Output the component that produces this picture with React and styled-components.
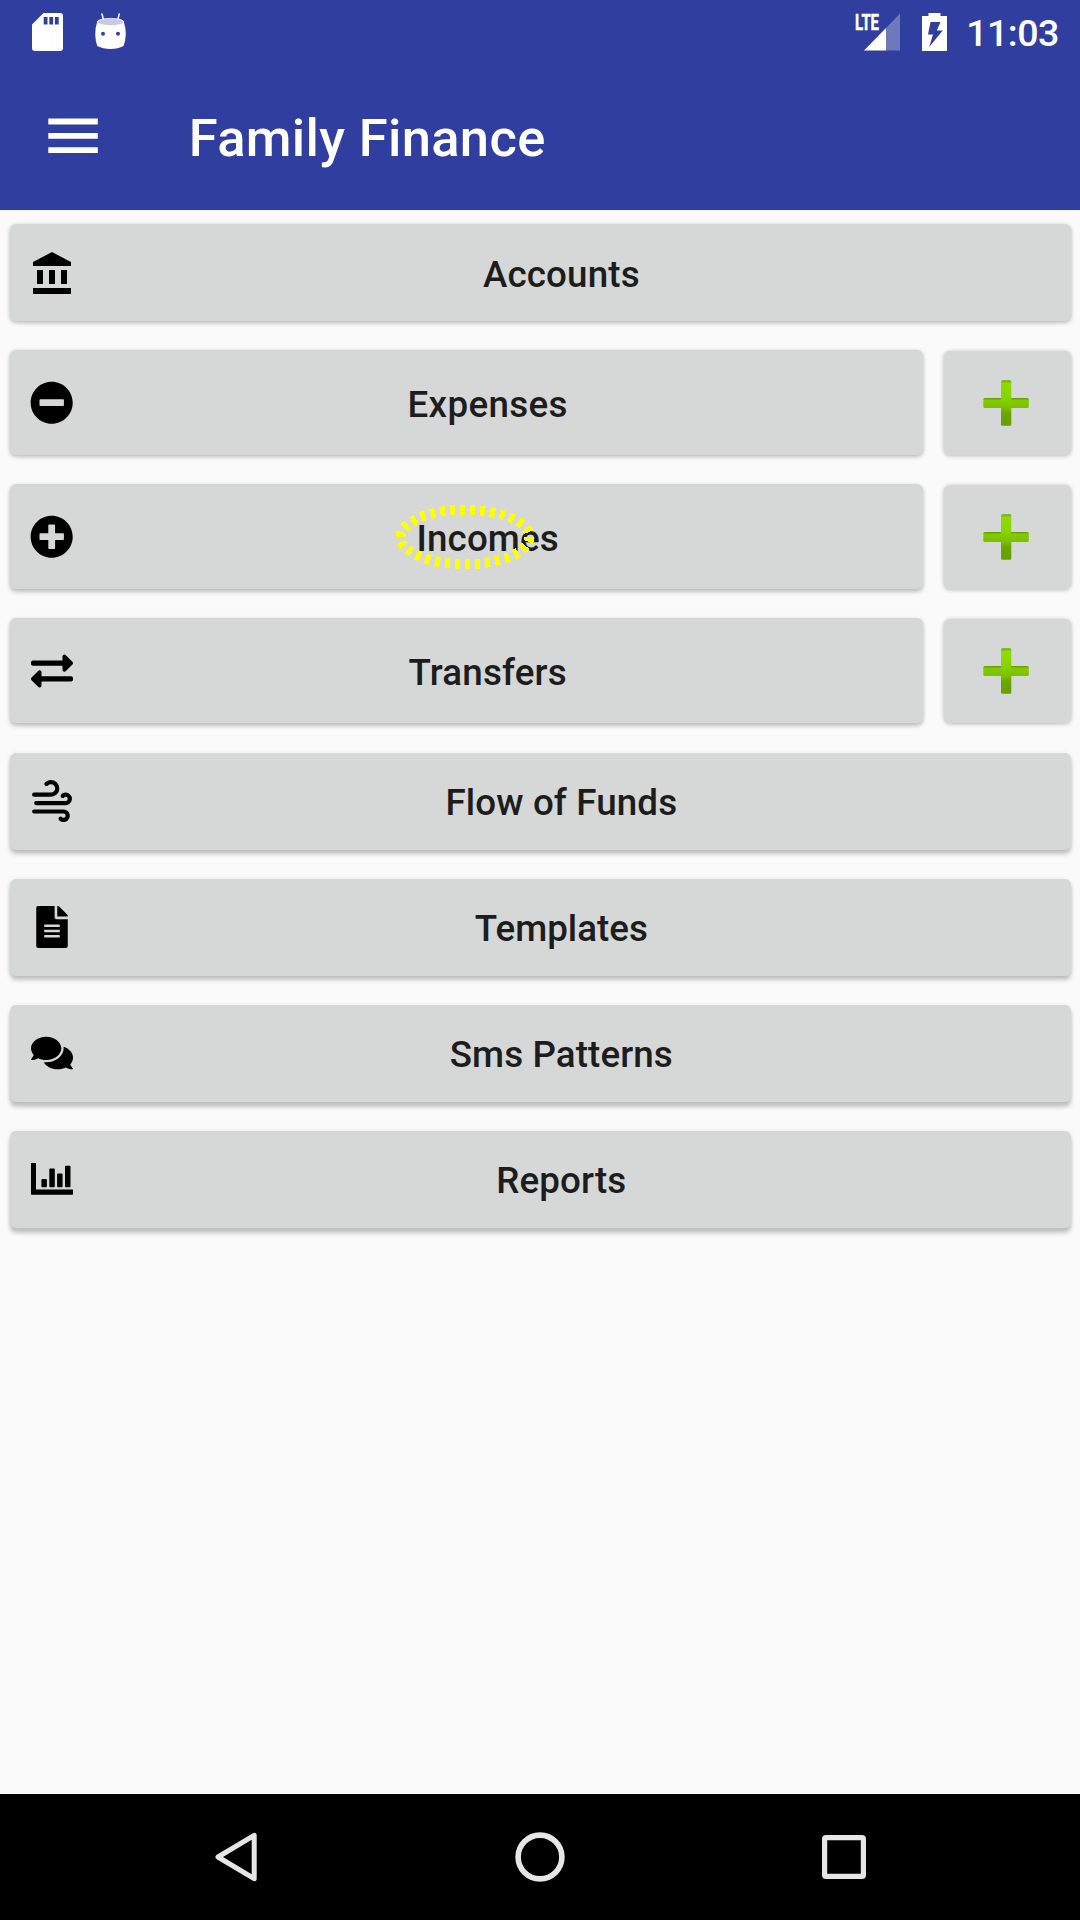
import React from "react";
import styled, { createGlobalStyle } from "styled-components";
import {
  FaMinusCircle,
  FaPlusCircle,
  FaExchangeAlt,
  FaFileAlt,
  FaComments,
} from "react-icons/fa";

const GlobalStyle = createGlobalStyle`
  * { box-sizing: border-box; }
  body { margin: 0; background: #fafafa; }
`;

const Screen = styled.div`
  width: 1080px;
  height: 1920px;
  display: flex;
  flex-direction: column;
  background: #fafafa;
  font-family: Roboto, "Liberation Sans", sans-serif;
  font-weight: 500;
  overflow: hidden;
`;

const Header = styled.header`
  height: 210px;
  background: #303f9f;
  color: #fff;
`;

const StatusBar = styled.div`
  height: 63px;
  display: flex;
  justify-content: space-between;
  padding-left: 32px;
  padding-right: 21.2px;
`;

const StatusGroup = styled.div`
  display: flex;
  align-items: center;
  gap: ${(p) => p.$gap}px;
`;

const Glyph = styled.svg`
  display: block;
  flex: none;
  overflow: visible;
`;

const Clock = styled.time`
  font-size: 37.5px;
  line-height: 44px;
  padding-top: 2px;
  letter-spacing: -0.5px;
  margin-left: -2px;
`;

const Toolbar = styled.div`
  height: 147px;
  display: flex;
  align-items: center;
  padding: 0 42px 1px 48px;
  gap: 90.8px;
`;

const MenuButton = styled.button`
  border: 0;
  padding: 0;
  background: none;
  display: flex;
`;

const Title = styled.h1`
  margin: 0;
  padding-top: 4px;
  font-size: 52.5px;
  line-height: 62px;
  font-weight: 500;
  letter-spacing: 0.33px;
`;

const Menu = styled.main`
  flex: 1;
  display: flex;
  flex-direction: column;
  gap: 29px;
  padding: 14px 9.4px 0 10.4px;
`;

const MenuRow = styled.div`
  display: flex;
  align-items: flex-end;
  gap: 20.2px;
  height: ${(p) => (p.$tall ? 105 : 97)}px;

  &:nth-child(4) {
    margin-bottom: 0.8px;
  }
`;

const Surface = styled.button`
  border: 0;
  border-radius: 6px;
  background: #d6d7d7;
  color: #1d1d1d;
  font: inherit;
  display: flex;
  align-items: center;
  box-shadow: 0 ${(p) => p.$depth}px 4px rgba(0, 0, 0, 0.22),
    0 0 4px rgba(0, 0, 0, 0.08);
`;

const ItemButton = styled(Surface)`
  flex: 1;
  height: 100%;
  padding: 0 21px 0 20.6px;
`;

const AddButton = styled(Surface)`
  width: 127.1px;
  height: 104.5px;
  justify-content: center;
  padding: 0 1.5px 0 0;
`;

const IconSlot = styled.span`
  width: 42px;
  height: 42px;
  display: flex;
  align-items: center;
  justify-content: center;
  color: #000;

  svg {
    flex: none;
  }
`;

const Label = styled.span`
  flex: 1;
  text-align: center;
  font-size: 36.75px;
  line-height: 44px;
  padding-top: ${(p) => p.$drop}px;
  letter-spacing: ${(p) => p.$tracking}px;
`;

const Marked = styled.span`
  position: relative;
`;

const Highlight = styled.svg`
  position: absolute;
  left: -22px;
  top: -14.5px;
`;

const NavBar = styled.nav`
  height: 126px;
  background: #000;
  display: flex;
  align-items: center;
  justify-content: center;
  gap: 256.7px;
`;

const NavKey = styled.button`
  border: 0;
  padding: 0;
  background: none;
  display: flex;
`;

const SdCardIcon = () => (
  <Glyph width="31" height="38" viewBox="0 0 31 38">
    <path
      fill="#fff"
      fillRule="evenodd"
      d="M11.500 0H28a3 3 0 0 1 3 3v32a3 3 0 0 1-3 3H3a3 3 0 0 1-3-3V11.500zM11.700 4v7.500h3.800V4zm5.600 0v7.500h3.800V4zm5.600 0v7.500h3.800V4z"
    />
  </Glyph>
);

const RobotIcon = () => (
  <Glyph width="31" height="37" viewBox="0 0 31 37">
    <path d="M7 1l1.700 7M24.200 1l-1.700 7" stroke="#fff" strokeWidth="1.500" strokeLinecap="round" />
    <path
      fill="#fff"
      d="M2.200 9Q0 15 .2 21.500Q.5 28 2.200 33Q8 36 15.500 36Q23 36 28.500 33Q30.500 28 30.800 21.500Q31 15 28.800 9z"
    />
    <ellipse cx="15.500" cy="9" rx="13.400" ry="3.600" fill="#c5cae6" stroke="#fff" strokeWidth=".8" />
    <circle cx="8" cy="20.700" r="2" fill="#303f9f" />
    <circle cx="23" cy="20.700" r="2" fill="#303f9f" />
  </Glyph>
);

const SignalIcon = () => (
  <Glyph width="46" height="38" viewBox="0 0 46 38">
    <path d="M45 .5V37.500H31V15z" fill="#fff" fillOpacity=".3" />
    <path d="M31 15V37.500H9z" fill="#fff" />
    <text
      x="0"
      y="16.700"
      fill="#fff"
      stroke="#fff"
      strokeWidth=".5"
      fontFamily="Roboto, sans-serif"
      fontWeight="700"
      fontSize="22"
      textLength="24"
      lengthAdjust="spacingAndGlyphs"
    >
      LTE
    </text>
  </Glyph>
);

const BatteryIcon = () => (
  <Glyph width="25" height="38" viewBox="0 0 25 38">
    <path
      fill="#fff"
      fillRule="evenodd"
      d="M6.500 0h12v3H25v35H0V3h6.500zM8.500 9L6 21.500h5L7.200 34 20.800 17.500h-6L18.500 9z"
    />
  </Glyph>
);

const BurgerIcon = () => (
  <Glyph width="50" height="36" viewBox="0 0 50 36">
    <path d="M.3 3.500h49.500M.3 17.900h49.500M.3 32.200h49.500" stroke="#fff" strokeWidth="5.800" />
  </Glyph>
);

const BankIcon = () => (
  <Glyph width="42" height="42" viewBox="1 1 21 21">
    <path d="M4 10v7h3v-7H4zm6 0v7h3v-7h-3zM2 22h19v-3H2v3zm14-12v7h3v-7h-3zm-4.500-9L2 6v2h19V6l-9.500-5z" />
  </Glyph>
);

const WindIcon = () => (
  <Glyph width="42" height="42" viewBox="2.500 2 20 20">
    <path d="M4,10A1,1 0 0,1 3,9A1,1 0 0,1 4,8H12A2,2 0 0,0 14,6A2,2 0 0,0 12,4C11.450,4 10.950,4.220 10.590,4.590C10.200,5 9.560,5 9.170,4.590C8.780,4.200 8.780,3.560 9.170,3.170C9.900,2.450 10.900,2 12,2A4,4 0 0,1 16,6A4,4 0 0,1 12,10H4M19,12A1,1 0 0,0 20,11A1,1 0 0,0 19,10C18.720,10 18.470,10.110 18.290,10.290C17.900,10.680 17.270,10.680 16.880,10.290C16.500,9.900 16.500,9.270 16.880,8.880C17.420,8.340 18.170,8 19,8A3,3 0 0,1 22,11A3,3 0 0,1 19,14H5A1,1 0 0,1 4,13A1,1 0 0,1 5,12H19M18,18H4A1,1 0 0,1 3,17A1,1 0 0,1 4,16H18A3,3 0 0,1 21,19A3,3 0 0,1 18,22C17.170,22 16.420,21.660 15.880,21.120C15.500,20.730 15.500,20.100 15.880,19.710C16.270,19.320 16.900,19.320 17.290,19.710C17.470,19.890 17.720,20 18,20A1,1 0 0,0 19,19A1,1 0 0,0 18,18Z" />
  </Glyph>
);

const ChartIcon = () => (
  <Glyph width="42" height="42" viewBox="0 0 42 42">
    <path d="M0 5.500a.5.500 0 0 1 .5-.5h4a.5.500 0 0 1 .5.500V31.500h36.500a.5.500 0 0 1 .5.500v4.300a.5.500 0 0 1-.5.500H.5a.5.500 0 0 1-.5-.5z" />
    <rect x="10.400" y="21" width="5.500" height="8.200" rx="1" />
    <rect x="18.300" y="10.400" width="5.500" height="18.800" rx="1" />
    <rect x="26.100" y="15.600" width="5.500" height="13.600" rx="1" />
    <rect x="34" y="7.800" width="5.500" height="21.400" rx="1" />
  </Glyph>
);

const AddIcon = () => (
  <Glyph width="46" height="46" viewBox="0 0 46 46">
    <defs>
      <linearGradient id="addV" x1="0" y1="0" x2="0" y2="1">
        <stop offset="0" stopColor="#6aa800" />
        <stop offset=".07" stopColor="#8fdc00" />
        <stop offset=".38" stopColor="#88d400" />
        <stop offset=".6" stopColor="#7cc000" />
        <stop offset=".72" stopColor="#6aa600" />
        <stop offset="1" stopColor="#66a000" />
      </linearGradient>
      <linearGradient id="addH" x1="0" y1="0" x2="0" y2="1">
        <stop offset="0" stopColor="#5f9600" />
        <stop offset=".22" stopColor="#84ca00" />
        <stop offset="1" stopColor="#7cc000" />
      </linearGradient>
    </defs>
    <rect x=".3" y="18" width="45.500" height="10" rx="1.500" fill="url(#addH)" />
    <rect x="18" y=".3" width="10.300" height="45.500" rx="1.500" fill="url(#addV)" />
  </Glyph>
);

const BackIcon = () => (
  <Glyph width="44" height="50" viewBox="0 0 44 50">
    <path d="M40.200 3.300V46.700L4 25z" fill="none" stroke="#e6e6e6" strokeWidth="5" strokeLinejoin="round" />
  </Glyph>
);

const HomeIcon = () => (
  <Glyph width="50" height="50" viewBox="0 0 50 50">
    <circle cx="25" cy="25" r="21.900" fill="none" stroke="#e6e6e6" strokeWidth="5.600" />
  </Glyph>
);

const RecentsIcon = () => (
  <Glyph width="44" height="44" viewBox="0 0 44 44">
    <rect x="2.600" y="2.600" width="38.800" height="38.800" rx="1.500" fill="none" stroke="#e6e6e6" strokeWidth="5.200" />
  </Glyph>
);

const items = [
  { label: "Accounts", icon: <BankIcon />, depth: 2, tracking: 0.15, drop: 5 },
  { label: "Expenses", icon: <FaMinusCircle size={43.4} />, add: true, depth: 2, tracking: 0.35, drop: 5 },
  { label: "Incomes", icon: <FaPlusCircle size={43.4} />, add: true, depth: 3, marked: true, tracking: 0.12, drop: 5 },
  { label: "Transfers", icon: <FaExchangeAlt size={42} />, add: true, depth: 3, tracking: 0.15, drop: 4 },
  { label: "Flow of Funds", icon: <WindIcon />, depth: 4, tracking: 0.12 },
  { label: "Templates", icon: <FaFileAlt size={42} />, depth: 4 },
  { label: "Sms Patterns", icon: <FaComments size={42} />, depth: 5, tracking: 0.1 },
  { label: "Reports", icon: <ChartIcon />, depth: 5, tracking: 0.1 },
];

function MenuItem({ item }) {
  return (
    <MenuRow $tall={item.add}>
      <ItemButton $depth={item.depth}>
        <IconSlot>{item.icon}</IconSlot>
        <Label $drop={item.drop || 3} $tracking={item.tracking || 0}>
          {item.marked ? (
            <Marked>
              {item.label}
              <Highlight width="142" height="68" viewBox="0 0 142 68">
                <ellipse
                  cx="71"
                  cy="34"
                  rx="64.500"
                  ry="27.300"
                  fill="none"
                  stroke="#ff0"
                  strokeWidth="10"
                  strokeDasharray="5 5"
                  shapeRendering="crispEdges"
                />
              </Highlight>
            </Marked>
          ) : (
            item.label
          )}
        </Label>
      </ItemButton>
      {item.add && (
        <AddButton $depth={1} aria-label={"Add " + item.label}>
          <AddIcon />
        </AddButton>
      )}
    </MenuRow>
  );
}

export default function App() {
  return (
    <Screen>
      <GlobalStyle />
      <Header>
        <StatusBar>
          <StatusGroup $gap={32}>
            <SdCardIcon />
            <RobotIcon />
          </StatusGroup>
          <StatusGroup $gap={21}>
            <SignalIcon />
            <BatteryIcon />
            <Clock>11:03</Clock>
          </StatusGroup>
        </StatusBar>
        <Toolbar>
          <MenuButton aria-label="Menu">
            <BurgerIcon />
          </MenuButton>
          <Title>Family Finance</Title>
        </Toolbar>
      </Header>
      <Menu>
        {items.map((item) => (
          <MenuItem key={item.label} item={item} />
        ))}
      </Menu>
      <NavBar>
        <NavKey aria-label="Back">
          <BackIcon />
        </NavKey>
        <NavKey aria-label="Home">
          <HomeIcon />
        </NavKey>
        <NavKey aria-label="Recent apps">
          <RecentsIcon />
        </NavKey>
      </NavBar>
    </Screen>
  );
}
